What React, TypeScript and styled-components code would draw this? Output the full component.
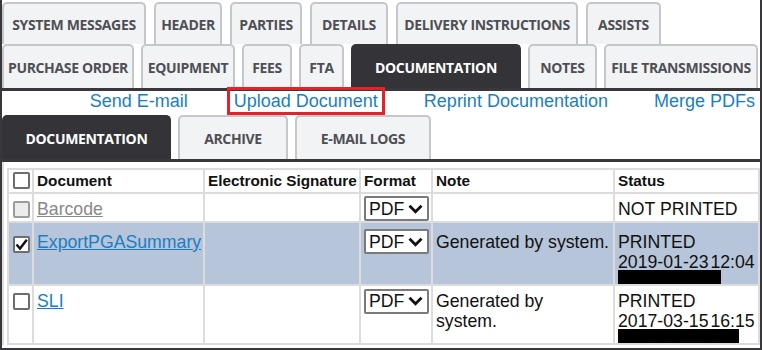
import styled, { createGlobalStyle } from "styled-components";

const GlobalStyle = createGlobalStyle`
  body {
    margin: 0;
    font-family: "Liberation Sans", Arial, sans-serif;
    background: #fff;
  }
`;

const topTabs = [
  { label: "SYSTEM MESSAGES", w: 144 },
  { label: "HEADER", w: 68 },
  { label: "PARTIES", w: 72 },
  { label: "DETAILS", w: 78 },
  { label: "DELIVERY INSTRUCTIONS", w: 182 },
  { label: "ASSISTS", w: 75 },
];

const secondTabs = [
  { label: "PURCHASE ORDER", w: 132 },
  { label: "EQUIPMENT", w: 94 },
  { label: "FEES", w: 50 },
  { label: "FTA", w: 45 },
  { label: "DOCUMENTATION", w: 170, active: true },
  { label: "NOTES", w: 69 },
  { label: "FILE TRANSMISSIONS", w: 154 },
];

const subTabs = [
  { label: "DOCUMENTATION", w: 169, active: true },
  { label: "ARCHIVE", w: 110 },
  { label: "E-MAIL LOGS", w: 136 },
];

type Doc = {
  name: string;
  disabled?: boolean;
  checked?: boolean;
  note?: React.ReactNode;
  status: string;
  printed?: string;
  redact?: number;
  selected?: boolean;
  pad: number;
};

const docs: Doc[] = [
  { name: "Barcode", disabled: true, status: "NOT PRINTED", pad: 2 },
  {
    name: "ExportPGASummary",
    checked: true,
    selected: true,
    note: "Generated by system.",
    status: "PRINTED",
    printed: "2019-01-23 12:04",
    redact: 103,
    pad: 6,
  },
  {
    name: "SLI",
    note: (
      <>
        Generated by
        <br />
        system.
      </>
    ),
    status: "PRINTED",
    printed: "2017-03-15 16:15",
    redact: 121,
    pad: 3,
  },
];

function Chevron() {
  return (
    <svg width="15" height="10" viewBox="0 0 15 10">
      <path d="M1.5 1.8 L7.5 7.8 L13.5 1.8" fill="none" stroke="#111" strokeWidth="2.8" />
    </svg>
  );
}

function Check() {
  return (
    <svg width="13" height="13" viewBox="0 0 13 13">
      <path d="M1.5 6.5 L5 10.5 L11.8 1.8" fill="none" stroke="#111" strokeWidth="2.4" />
    </svg>
  );
}

export default function App() {
  return (
    <Frame>
      <GlobalStyle />
      <TabRow $h={42} $gap={8}>
        {topTabs.map((t) => (
          <Tab key={t.label} $w={t.w}>
            {t.label}
          </Tab>
        ))}
      </TabRow>
      <TabRow $h={44} $gap={7}>
        {secondTabs.map((t) => (
          <Tab key={t.label} $w={t.w} $active={t.active}>
            {t.label}
          </Tab>
        ))}
      </TabRow>
      <Rule />

      <LinkBar>
        <ActionLink>Send E-mail</ActionLink>
        <ActionLink $boxed>Upload Document</ActionLink>
        <ActionLink>Reprint Documentation</ActionLink>
        <ActionLink>Merge PDFs</ActionLink>
      </LinkBar>

      <TabRow $h={44} $gap={7}>
        {subTabs.map((t) => (
          <Tab key={t.label} $w={t.w} $active={t.active}>
            {t.label}
          </Tab>
        ))}
      </TabRow>
      <Rule />

      <TableArea>
        <DocTable>
          <colgroup>
            <col style={{ width: 25 }} />
            <col style={{ width: 171 }} />
            <col style={{ width: 156 }} />
            <col style={{ width: 72 }} />
            <col style={{ width: 182 }} />
            <col />
          </colgroup>
          <thead>
            <HeadRow>
              <Th>
                <Box />
              </Th>
              <Th>Document</Th>
              <Th>Electronic Signature</Th>
              <Th>Format</Th>
              <Th>Note</Th>
              <Th>Status</Th>
            </HeadRow>
          </thead>
          <tbody>
            {docs.map((d) => (
              <Row key={d.name} $selected={d.selected}>
                <Td $pad={d.pad}>
                  <Box $disabled={d.disabled}>{d.checked && <Check />}</Box>
                </Td>
                <Td $pad={d.pad}>
                  <DocLink $disabled={d.disabled}>{d.name}</DocLink>
                </Td>
                <Td $pad={d.pad} />
                <Td $pad={d.pad}>
                  <FormatSelect>
                    PDF
                    <Chevron />
                  </FormatSelect>
                </Td>
                <Td $pad={d.pad}>{d.note}</Td>
                <Td $pad={d.pad}>
                  <div>{d.status}</div>
                  {d.printed && <Stamp>{d.printed}</Stamp>}
                  {d.redact && <Redacted style={{ width: d.redact }} />}
                </Td>
              </Row>
            ))}
          </tbody>
        </DocTable>
      </TableArea>
    </Frame>
  );
}

const Frame = styled.div`
  width: 762px;
  height: 350px;
  box-sizing: border-box;
  border: 2px solid #38383c;
  border-top: none;
  padding-top: 2px;
  overflow: hidden;
  background: #fff;
`;

const TabRow = styled.div<{ $h: number; $gap: number }>`
  display: flex;
  align-items: stretch;
  gap: ${(p) => p.$gap}px;
  height: ${(p) => p.$h}px;
`;

const Tab = styled.div<{ $w: number; $active?: boolean }>`
  width: ${(p) => p.$w}px;
  flex: none;
  box-sizing: border-box;
  display: flex;
  align-items: center;
  justify-content: center;
  border: 2px solid ${(p) => (p.$active ? "#343438" : "#c6c7ca")};
  border-bottom: none;
  border-radius: 5px 5px 0 0;
  background: ${(p) => (p.$active ? "#343438" : "#f2f3f5")};
  color: ${(p) => (p.$active ? "#fff" : "#4e4f54")};
  font-family: "Open Sans", "Noto Sans", sans-serif;
  font-weight: 700;
  font-size: 14px;
  letter-spacing: -0.35px;
  white-space: nowrap;
`;

const Rule = styled.div`
  height: 3px;
  background: #38383c;
`;

const LinkBar = styled.div`
  display: flex;
  justify-content: flex-end;
  align-items: flex-start;
  gap: 46px;
  height: 25px;
  margin-top: -1px;
  padding-right: 5px;
`;

const ActionLink = styled.a<{ $boxed?: boolean }>`
  display: inline-block;
  height: 22px;
  line-height: 22px;
  font-size: 18px;
  color: #1b7ec2;
  cursor: pointer;
  padding: 0 ${(p) => (p.$boxed ? 4 : 0)}px;
  margin: 0 ${(p) => (p.$boxed ? -4 : 0)}px;
  outline: ${(p) => (p.$boxed ? "3px solid #e3222b" : "none")};
`;

const TableArea = styled.div`
  border-left: 2px solid #dedede;
  padding: 6px 0 0 3px;
`;

const DocTable = styled.table`
  width: 100%;
  table-layout: fixed;
  border-collapse: collapse;
  font-size: 17.7px;
  color: #111;
  line-height: 20px;
`;

const HeadRow = styled.tr`
  height: 24px;
`;

const Th = styled.th`
  border: 2px solid #dcdcdc;
  padding: 2px 3px 0;
  text-align: left;
  vertical-align: baseline;
  font-size: 15.3px;
  line-height: 18px;
  font-weight: 700;
  white-space: nowrap;
  overflow: hidden;
`;

const Row = styled.tr<{ $selected?: boolean }>`
  background: ${(p) => (p.$selected ? "#b6c5d9" : "#fff")};
`;

const Td = styled.td<{ $pad: number }>`
  border: 2px solid #dcdcdc;
  padding: ${(p) => p.$pad}px 2px 0 3px;
  vertical-align: baseline;
  white-space: nowrap;
`;

const Box = styled.span<{ $disabled?: boolean }>`
  display: inline-flex;
  align-items: center;
  justify-content: center;
  box-sizing: border-box;
  width: 17px;
  height: 17px;
  vertical-align: -3px;
  margin-left: 1px;
  border: 2px solid ${(p) => (p.$disabled ? "#9c9c9c" : "#6d6d6d")};
  border-radius: 2px;
  background: ${(p) => (p.$disabled ? "#ececec" : "#fff")};
`;

const DocLink = styled.a<{ $disabled?: boolean }>`
  color: ${(p) => (p.$disabled ? "#888" : "#1b7ec2")};
  text-decoration: underline;
  cursor: pointer;
`;

const FormatSelect = styled.span`
  display: inline-flex;
  align-items: center;
  justify-content: space-between;
  box-sizing: border-box;
  width: 65px;
  height: 25px;
  padding: 0 4px 0 3px;
  border: 2px solid #7a7a7a;
  border-radius: 2px;
  background: #fff;
  color: #111;
`;

const Stamp = styled.div`
  word-spacing: -3px;
`;

const Redacted = styled.div`
  height: 14px;
  margin-top: -2px;
  background: #000;
`;
